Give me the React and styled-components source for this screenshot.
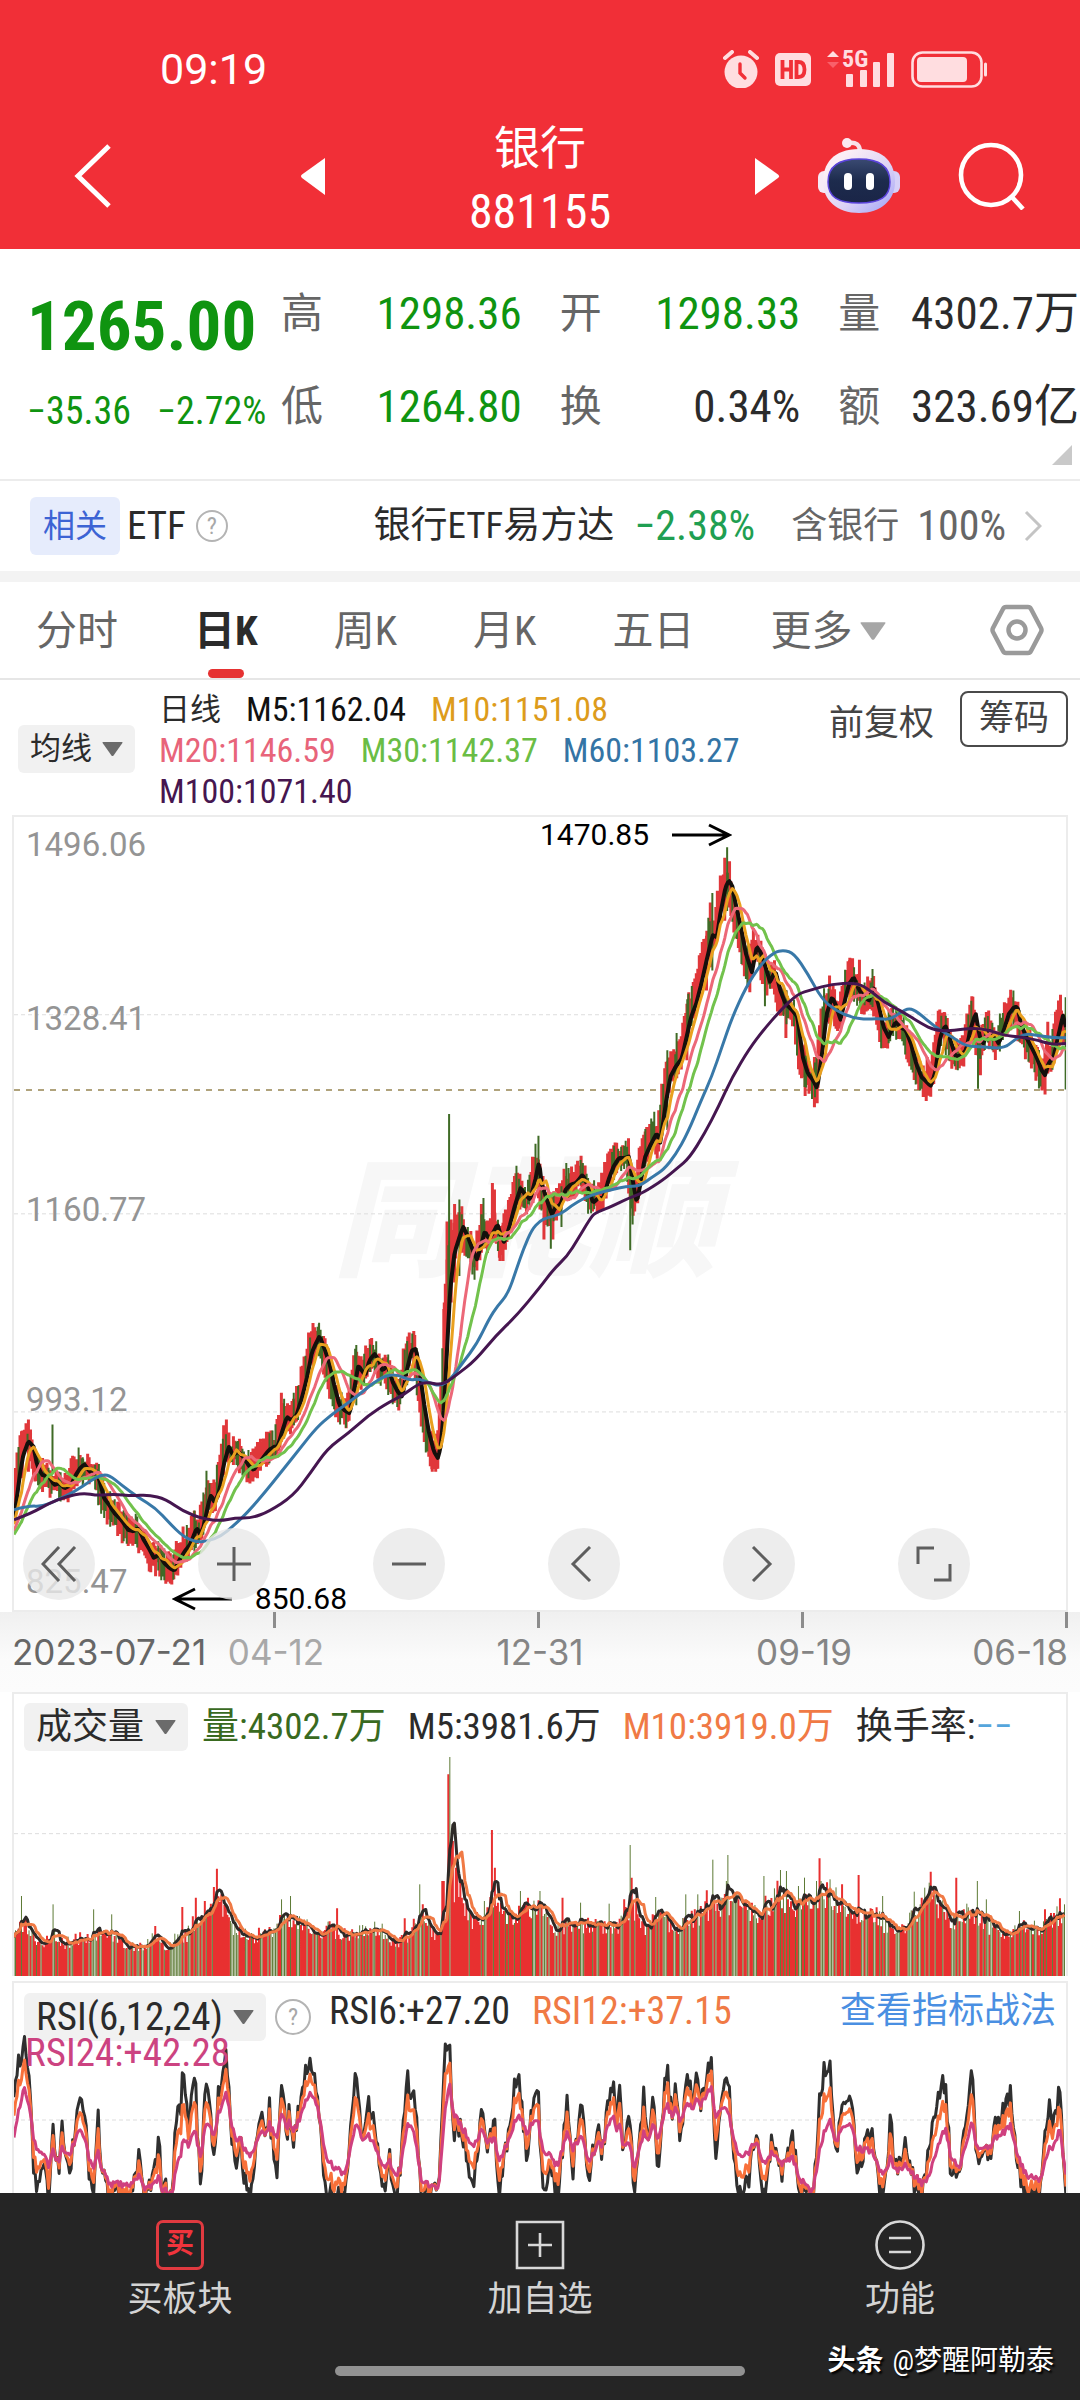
import React, { useState } from 'react';
import styled, { createGlobalStyle } from 'styled-components';

const GlobalStyle = createGlobalStyle`
    * {
        box-sizing: border-box;
    }
    body {
        margin: 0;
        background: #ffffff;
        color: #2b2b2b;
        font-family: 'Roboto Condensed', 'Noto Sans CJK SC', sans-serif;
    }
    button, select {
        font: inherit;
        color: inherit;
        background: none;
        border: 0;
        padding: 0;
        margin: 0;
        cursor: pointer;
    }
    svg {
        display: block;
        flex: none;
    }
    a {
        text-decoration: none;
    }
`;

/* ---------- series helpers ---------- */

const DAYS = 700;

// same noise on every render
const noise = (n) => {
    const s = Math.sin(n * 127.1 + 11.7) * 43758.5453;
    return s - Math.floor(s);
};

const toPairs = (text) => text.trim().split(/\s+/).map((p) => p.split(',').map(Number));

const valueAt = (pairs, x) => {
    if (x <= pairs[0][0]) return pairs[0][1];
    for (let i = 1; i < pairs.length; i++) {
        if (x <= pairs[i][0]) {
            const [x0, y0] = pairs[i - 1];
            const [x1, y1] = pairs[i];
            return y0 + ((y1 - y0) * (x - x0)) / (x1 - x0 || 1);
        }
    }
    return pairs[pairs.length - 1][1];
};

const linePath = (pts) => 'M' + pts.map(([x, y]) => `${x.toFixed(1)} ${y.toFixed(1)}`).join('L');

const smoothPath = (pts) => {
    let d = `M${pts[0][0]} ${pts[0][1]}`;
    for (let i = 1; i < pts.length - 1; i++) {
        const mx = (pts[i][0] + pts[i + 1][0]) / 2;
        const my = (pts[i][1] + pts[i + 1][1]) / 2;
        d += `Q${pts[i][0]} ${pts[i][1]} ${mx} ${my}`;
    }
    const last = pts[pts.length - 1];
    return `${d}L${last[0]} ${last[1]}`;
};

/* ---------- price series ---------- */

const MA5 = toPairs(`
-100,2190 -40,2205 10,2170 38,2135 45,2080 55,2000 65,1940 80,1898 95,1915 105,1970 120,2000 140,2005 155,2030 170,2025
185,2040 205,2030 215,2005 230,1980 243,1968 255,1985 265,1995 278,1995 288,2020 300,2070 315,2090 330,2115 350,2135
370,2165 385,2170 400,2160 415,2195 430,2220 445,2250 460,2240 475,2265 490,2280 505,2288 520,2255 535,2230 550,2210
570,2160 580,2180 590,2155 605,2080 612,2060 622,2085 635,2050 648,1970 663,1915 675,1940 690,1930 705,1945 720,1970
735,1985 750,1965 765,1945 780,1925 795,1915 805,1915 818,1870 832,1825 845,1835 860,1820 875,1770 890,1710 905,1630
918,1600 927,1582 940,1615 955,1660 970,1730 985,1790 1000,1805 1015,1815 1028,1740 1040,1670 1050,1685 1060,1700
1072,1655 1087,1635 1100,1655 1110,1685 1125,1670 1140,1720 1155,1750 1168,1765 1180,1690 1195,1625 1208,1620
1220,1700 1232,1790 1245,1870 1260,1930 1272,1950 1280,1910 1290,1790 1300,1580 1308,1430 1320,1330 1332,1290
1345,1252 1358,1280 1372,1320 1385,1350 1397,1310 1408,1265 1420,1290 1432,1270 1445,1245 1455,1280 1465,1300
1480,1250 1495,1190 1512,1135 1525,1155 1540,1170 1555,1110 1566,1055 1573,1120 1588,1170 1603,1215 1613,1195
1628,1185 1643,1140 1658,1125 1673,1120 1693,1095 1708,1130 1723,1180 1738,1165 1753,1165 1768,1110 1783,1070
1798,1045 1813,1045 1828,1040 1838,1110 1850,1180 1863,1110 1873,1045 1888,1010 1908,970 1918,1000 1928,930
1936,870 1948,800 1963,770 1981,745 1993,690 2008,620 2023,580 2038,520 2053,450 2071,373 2083,380 2093,310
2108,230 2118,208 2128,225 2138,280 2153,350 2168,430 2185,485 2200,405 2213,430 2228,480 2238,515 2253,480
2268,540 2283,580 2303,600 2318,620 2333,740 2348,790 2363,810 2375,835 2388,740 2403,610 2418,560 2428,580
2443,628 2458,560 2468,520 2481,500 2498,540 2513,560 2526,570 2538,530 2553,580 2568,650 2583,680 2603,635
2618,650 2633,660 2648,700 2663,760 2678,800 2693,815 2705,828 2718,790 2733,680 2748,645 2763,690 2778,740
2793,735 2808,720 2823,650 2836,608 2848,680 2858,700 2873,660 2888,670 2903,700 2918,660 2933,610 2948,590
2958,590 2968,640 2983,680 2998,710 3013,740 3028,780 3038,795 3048,760 3063,740 3076,680 3090,615 3099,650`);

const MA60 = toPairs(`
38,2105 80,2093 120,2095 160,2078 215,2050 260,2018 290,2000 315,2000 350,2030 400,2068 450,2100 490,2145 530,2185
565,2202 600,2200 640,2185 680,2150 720,2110 770,2050 820,1985 870,1920 920,1855 960,1820 1000,1790 1040,1760
1080,1725 1120,1700 1155,1698 1190,1715 1215,1710 1240,1720 1280,1733 1310,1710 1345,1660 1385,1605 1420,1530
1445,1490 1475,1455 1500,1380 1520,1320 1545,1260 1568,1235 1588,1225 1628,1215 1658,1190 1698,1165 1738,1150
1778,1140 1818,1130 1858,1130 1898,1100 1928,1080 1963,1035 1998,970 2038,870 2068,800 2098,710 2128,620 2168,530
2208,465 2248,425 2278,418 2308,428 2348,490 2388,565 2428,600 2478,622 2518,627 2548,624 2588,628 2618,605
2643,593 2668,605 2718,650 2768,680 2808,708 2858,710 2918,715 2948,690 2978,670 3018,675 3058,682 3099,682`);

const MA100 = toPairs(`
38,2135 90,2115 140,2085 190,2065 240,2054 280,2062 330,2058 380,2063 430,2060 480,2073 530,2110 590,2133 640,2138
680,2130 730,2130 780,2110 850,2063 900,1995 950,1920 1010,1875 1070,1820 1130,1780 1170,1760 1210,1728 1240,1720
1285,1730 1330,1695 1380,1655 1440,1580 1500,1520 1568,1435 1608,1380 1648,1340 1678,1290 1713,1230 1728,1210
1768,1195 1828,1165 1868,1150 1928,1110 1968,1075 2003,1045 2048,970 2088,890 2128,800 2178,715 2218,660 2268,600
2318,550 2358,538 2418,520 2483,517 2518,530 2568,575 2618,600 2678,640 2718,660 2768,662 2828,652 2878,660
2918,675 2968,680 3018,690 3058,703 3099,700`);

// x, top, bottom, falling day
const SPIKES = [
    [62, 1867, 2010, 0], [80, 1833, 1990, 0], [150, 1848, 1998, 1], [238, 1947, 2030, 1], [285, 1967, 2050, 1],
    [450, 2230, 2305, 0], [486, 2270, 2315, 0], [503, 2260, 2314, 0], [530, 2155, 2260, 0], [563, 2107, 2230, 1],
    [598, 1987, 2130, 1], [648, 1850, 2000, 0], [656, 1833, 1960, 0], [816, 1752, 1900, 0], [824, 1770, 1890, 1],
    [852, 1752, 1850, 1], [908, 1542, 1670, 0], [925, 1545, 1640, 1], [1004, 1790, 1858, 1], [1034, 1608, 1790, 1],
    [1074, 1607, 1690, 1], [1126, 1652, 1740, 1], [1182, 1596, 1730, 1], [1204, 1578, 1680, 0],
    [1255, 1900, 1990, 0], [1265, 1890, 1990, 0], [1290, 1480, 1800, 0], [1298, 1236, 1600, 0], [1304, 912, 1560, 1],
    [1310, 1230, 1480, 0], [1320, 1183, 1420, 0], [1334, 1170, 1400, 1], [1341, 1190, 1330, 0],
    [1378, 1320, 1412, 1], [1398, 1183, 1330, 0], [1404, 1165, 1300, 1], [1430, 1120, 1290, 0], [1436, 1140, 1290, 0],
    [1452, 1250, 1355, 0], [1461, 1240, 1355, 0], [1500, 1068, 1210, 1], [1510, 1092, 1200, 0], [1548, 1042, 1180, 0],
    [1564, 978, 1120, 1], [1580, 1130, 1290, 0], [1600, 1180, 1318, 1], [1606, 1170, 1290, 0], [1631, 1130, 1253, 1],
    [1645, 1060, 1170, 1], [1688, 1038, 1130, 0], [1693, 1060, 1120, 1], [1784, 1008, 1110, 1], [1826, 985, 1070, 0],
    [1831, 1060, 1323, 1], [1838, 1080, 1245, 1], [1875, 957, 1070, 1], [1901, 905, 1010, 1], [1939, 720, 960, 1],
    [1966, 668, 800, 1], [1996, 580, 750, 0], [2000, 550, 700, 1], [2053, 375, 540, 0], [2064, 275, 470, 0],
    [2070, 246, 480, 1], [2106, 140, 330, 0], [2113, 108, 300, 1], [2120, 150, 290, 0], [2179, 400, 545, 0],
    [2223, 430, 587, 1], [2284, 540, 683, 0], [2340, 700, 858, 0], [2367, 740, 892, 0], [2375, 760, 880, 0],
    [2411, 495, 640, 0], [2470, 441, 560, 0], [2478, 443, 560, 0], [2498, 447, 570, 0], [2536, 475, 590, 1],
    [2512, 540, 612, 0], [2580, 620, 715, 0], [2695, 740, 850, 0], [2703, 760, 857, 0], [2746, 607, 720, 0],
    [2825, 557, 700, 0], [2843, 690, 836, 1], [2850, 660, 795, 0], [2874, 600, 690, 0], [2938, 538, 660, 0],
    [2946, 540, 650, 1], [3038, 740, 853, 0], [3046, 634, 790, 0], [3083, 553, 650, 0], [3098, 560, 838, 1],
];

const P_LEFT = 38;
const P_STEP = 3061 / DAYS;
const dayX = (i) => P_LEFT + i * P_STEP;
const m5 = (i) => valueAt(MA5, dayX(i));
const m10 = (i) => (m5(i) + m5(i - 5)) / 2;
const m20 = (i) => (m10(i) + m10(i - 10)) / 2;
const m30 = (i) => (m10(i) + m10(i - 10) + m10(i - 20)) / 3;
const series = (fn) => linePath(Array.from({ length: DAYS + 1 }, (_, i) => [dayX(i), fn(i)]));

const candles = Array.from({ length: DAYS }, (_, i) => {
    const mid = m5(i + 2);
    const slope = m5(i + 3) - m5(i);
    const falling = noise(i) < (slope > 0 ? 0.42 : 0.18);
    const up = 14 + noise(i * 3) * 40 + Math.abs(slope) / 3;
    const down = 14 + noise(i * 5) * 34 + Math.abs(slope) / 3;
    return [dayX(i), mid - up, mid + down, falling ? 1 : 0];
}).concat(SPIKES);

const candlePath = (kind) =>
    candles.filter((c) => c[3] === kind).map(([x, t, b]) => `M${x.toFixed(1)} ${t.toFixed(0)}V${b.toFixed(0)}`).join('');

/* ---------- volume series ---------- */

const VOL_BASE = toPairs(`
18,805 30,760 42,720 55,760 68,780 85,752 100,790 115,765 130,770 150,755 165,748 185,780 205,800 230,768 250,795
265,765 280,755 290,715 303,690 318,658 328,660 340,720 355,745 375,768 390,740 402,745 415,710 430,705 445,725
465,745 490,740 505,755 530,745 560,740 580,780 598,770 612,720 625,715 640,765 680,640 692,710 705,715 715,700
722,670 735,690 750,705 765,680 790,675 805,720 820,735 850,725 875,735 905,740 918,700 932,675 945,735 965,705
985,738 1005,710 1025,700 1042,665 1060,670 1080,655 1100,690 1120,675 1140,625 1155,660 1170,670 1185,665
1205,625 1225,640 1240,680 1255,690 1270,670 1290,715 1310,750 1330,715 1345,680 1360,640 1375,670 1390,720
1410,690 1430,695 1450,735 1465,755 1490,725 1510,740 1530,720 1545,700 1550,700`);

const VOL_SPIKES = toPairs(`
30,645 75,670 134,685 160,700 223,735 264,678 283,650 297,660 309,618 314,563 321,640 408,655 421,645 488,682
588,712 608,610 614,670 642,600 645,600 650,280 652,228 655,480 658,480 661,560 664,540 667,600 671,650 702,660
715,447 718,560 756,630 785,630 817,650 843,665 884,668 907,655 916,492 918,590 952,648 997,640 1014,640 1028,628
1036,536 1056,600 1057,522 1071,632 1110,585 1134,567 1142,570 1160,615 1170,590 1187,600 1190,532 1194,600
1206,595 1223,610 1249,582 1284,645 1328,632 1345,620 1350,605 1354,572 1391,590 1421,600 1435,655 1482,690
1520,685 1541,652 1547,670`);

const V_STEP = 1532 / DAYS;
const volX = (i) => 18 + i * V_STEP;

const volumes = Array.from({ length: DAYS }, (_, i) => {
    const base = 885 - valueAt(VOL_BASE, volX(i + 4));
    return base * (0.78 + noise(i * 7 + 1) * 0.36);
});
VOL_SPIKES.forEach(([x, y]) => {
    const i = Math.round((x - 18) / V_STEP);
    if (i < DAYS) volumes[i] = Math.max(volumes[i], 885 - y);
});

const volAverage = (n) =>
    linePath(volumes.map((_, i) => {
        const part = volumes.slice(Math.max(0, i - n + 1), i + 1);
        return [volX(i), 885 - part.reduce((a, b) => a + b, 0) / part.length];
    }));

const volBars = (test) =>
    volumes.map((v, i) => (test(i) ? `M${volX(i).toFixed(1)} 885V${(885 - v).toFixed(0)}` : '')).join('');

const VOL_GREEN_DAYS = [75, 134, 160, 380, 421, 608, 652, 756, 785, 843, 916, 952, 1014, 1036, 1057, 1071, 1110, 1134, 1160, 1284, 1328, 1421, 1482]
    .map((x) => Math.round((x - 18) / V_STEP));
const VOL_RED_DAYS = [314, 715, 718, 1190, 1249, 1354, 1391].map((x) => Math.round((x - 18) / V_STEP));
const isGreenVolume = (i) =>
    VOL_GREEN_DAYS.includes(i) || (noise(i + 400) > 0.66 && !(i > 284 && i < 300) && !VOL_RED_DAYS.includes(i));

/* ---------- RSI series ---------- */

const RSI6 = toPairs(`
18,385 23,240 28,240 32,165 40,310 47,560 52,640 60,560 68,650 75,425 83,600 88,460 96,575 103,520 113,330 119,355
127,560 133,640 141,415 147,600 160,650 190,650 196,550 202,515 208,640 222,600 228,472 234,620 248,650 255,380
260,400 265,250 272,470 281,268 289,625 299,270 308,535 316,350 327,232 335,480 342,570 347,490 358,650 366,600
377,380 384,500 390,390 400,610 409,296 415,470 419,390 424,500 432,410 440,285 448,225 457,285 465,480 473,640
485,650 500,640 508,480 515,260 525,510 535,375 543,420 555,625 565,540 575,640 583,520 590,268 596,390 601,340
610,620 625,650 636,620 645,210 652,172 656,460 670,440 688,630 700,345 707,540 717,405 725,640 738,470 751,272
760,450 765,550 774,350 781,330 788,640 800,560 810,640 823,372 832,560 844,375 855,620 868,415 875,540 883,370
890,300 895,430 900,355 907,540 914,345 920,640 935,355 943,460 949,335 956,580 968,258 976,400 982,300 988,470
999,265 1006,380 1012,295 1018,390 1034,218 1039,540 1050,300 1058,290 1066,560 1076,640 1088,600 1098,445
1110,640 1123,480 1133,600 1143,520 1153,480 1163,640 1183,650 1190,380 1197,275 1206,225 1214,560 1224,345
1236,325 1245,560 1256,520 1266,445 1276,600 1285,640 1294,440 1304,560 1317,490 1328,600 1340,640 1355,430
1365,330 1374,305 1383,600 1395,560 1413,268 1420,540 1430,480 1440,545 1448,430 1460,400 1469,322 1480,560
1495,640 1512,630 1524,378 1531,440 1541,325 1549,640`);

const RSI_SLOW = toPairs(`
18,515 32,370 60,510 80,540 113,480 135,540 160,600 190,600 215,620 250,640 270,520 290,500 310,440 327,380 345,470
370,490 400,430 430,440 450,370 460,390 475,510 500,560 520,470 545,520 580,570 595,460 612,590 636,630 652,350
670,440 700,470 730,510 760,430 785,460 805,530 830,480 860,530 890,440 920,540 945,470 970,410 1000,400 1034,350
1050,400 1075,490 1095,490 1120,530 1150,550 1180,630 1205,480 1235,460 1260,520 1290,570 1330,580 1350,620
1375,490 1395,560 1413,480 1430,500 1469,470 1490,560 1515,590 1541,490 1550,560`);

const rsiLine = (share) =>
    linePath(Array.from({ length: DAYS + 1 }, (_, i) => {
        const x = volX(i);
        const slow = valueAt(RSI_SLOW, x);
        const fast = valueAt(RSI6, x) + (noise(i * 2 + 3) - 0.5) * 80;
        return [x, slow + (fast - slow) * share];
    }));

/* ---------- header ---------- */

const Page = styled.main`
    display: flex;
    flex-direction: column;
    overflow: hidden;
`;

const Header = styled.header`
    background: #f12f37;
    color: #ffffff;
    padding-bottom: 5px;
`;

const StatusBar = styled.div`
    display: flex;
    align-items: center;
    justify-content: space-between;
    padding: 47px 92px 0 160px;
    color: #ffdde0;
`;

const Clock = styled.time`
    font-family: Roboto, sans-serif;
    font-size: 43px;
    line-height: 44px;
    color: #ffffff;
`;

const StatusIcons = styled.div`
    display: flex;
    align-items: center;
    gap: 16px;
`;

const NavBar = styled.nav`
    display: grid;
    grid-template-columns: 1fr 480px 1fr;
    align-items: center;
    padding-top: 17px;
`;

const NavSide = styled.div`
    display: flex;
    align-items: center;
    justify-content: ${({ $end }) => ($end ? 'space-between' : 'flex-start')};
    padding: ${({ $end }) => ($end ? '0 54px 0 38px' : '0 0 0 74px')};
`;

const Switcher = styled.div`
    display: flex;
    align-items: center;
    justify-content: space-between;
`;

const Title = styled.h1`
    display: flex;
    flex-direction: column;
    align-items: center;
    margin: 0;
    padding-top: 8px;
    font-size: 48px;
    line-height: 64px;
    font-weight: 400;
`;

const TitleName = styled.span`
    font-size: 46px;
`;

const IconButton = styled.button`
    display: flex;
`;

/* ---------- quote ---------- */

const Quote = styled.section`
    position: relative;
    display: grid;
    grid-template-columns: 281px 1fr;
    padding: 18px 1px 26px 0;
    border-bottom: 2px solid #ececec;
`;

const Last = styled.div`
    padding: 10px 0 0 27px;
    color: #0f9410;
`;

const LastPrice = styled.div`
    font-size: 69px;
    font-weight: 700;
    line-height: 100px;
`;

const LastChange = styled.div`
    display: flex;
    gap: 26px;
    font-size: 38px;
    line-height: 68px;
    white-space: nowrap;
`;

const Stats = styled.dl`
    display: grid;
    grid-template-columns: repeat(3, 1fr);
    column-gap: 38px;
    margin: 0;
`;

const Stat = styled.div`
    display: flex;
    align-items: center;
    justify-content: space-between;
    font-size: 45px;
    line-height: 93px;
    white-space: nowrap;
`;

const StatLabel = styled.dt`
    font-size: 42px;
    color: #666666;
`;

const StatValue = styled.dd`
    margin: 0;
    color: ${({ $down }) => ($down ? '#0f9410' : '#2b2b2b')};
`;

const Corner = styled.button`
    position: absolute;
    right: 8px;
    bottom: 14px;
`;

const EtfRow = styled.a`
    display: flex;
    align-items: center;
    padding: 16px 38px 16px 30px;
    font-size: 36px;
    line-height: 58px;
    color: #2b2b2b;
    border-bottom: 11px solid #f3f3f3;
`;

const Badge = styled.span`
    padding: 0 13px;
    margin-right: 7px;
    border-radius: 6px;
    background: #e6ecfc;
    color: #3c63d4;
    font-size: 32px;
`;

const EtfTag = styled.span`
    font-size: 39px;
`;

const EtfName = styled.span`
    margin-left: auto;
    font-size: 37px;
`;

const EtfChange = styled.span`
    margin: 0 36px 0 20px;
    color: #1f9f52;
    font-size: 42px;
`;

const EtfShare = styled.span`
    display: flex;
    align-items: center;
    gap: 18px;
    color: #666666;
`;

const EtfWeight = styled.span`
    font-size: 42px;
`;

/* ---------- tabs ---------- */

const Tabs = styled.nav`
    display: flex;
    align-items: flex-start;
    gap: 76px;
    padding: 17px 36px 0 36px;
    border-bottom: 2px solid #e6e6e6;
`;

const Tab = styled.button`
    display: flex;
    flex-direction: column;
    align-items: center;
    font-size: 41px;
    line-height: 64px;
    font-weight: ${({ $active }) => ($active ? 700 : 400)};
    color: ${({ $active }) => ($active ? '#2b2b2b' : '#666666')};

    &::after {
        content: '';
        width: 36px;
        height: 9px;
        margin-top: 6px;
        border-radius: 5px;
        background: ${({ $active }) => ($active ? '#e63232' : 'transparent')};
    }
`;

const SettingButton = styled(IconButton)`
    margin-left: auto;
    padding-top: 5px;
`;

const Picker = styled.label`
    display: flex;
    align-items: center;
    gap: ${({ $plain }) => ($plain ? '8px' : '10px')};
    padding: ${({ $plain }) => ($plain ? '0' : '0 12px')};
    border-radius: 6px;
    background: ${({ $plain }) => ($plain ? 'none' : '#f1f1f1')};
    color: ${({ $plain }) => ($plain ? '#666666' : '#2b2b2b')};
    font-size: ${({ $size }) => $size}px;
    line-height: ${({ $plain }) => ($plain ? '64px' : '48px')};
`;

const PickerSelect = styled.select`
    appearance: none;
    outline: none;
`;

/* ---------- legends ---------- */

const AverageBar = styled.section`
    display: flex;
    align-items: flex-start;
    padding: 9px 12px 3px 18px;
`;

const AveragePicker = styled.div`
    padding-top: 36px;
    margin-right: 24px;
`;

const AverageList = styled.div`
    flex: 1;
    display: flex;
    flex-wrap: wrap;
    column-gap: 25px;
    font-size: 34px;
    line-height: 41px;
    max-width: 600px;
`;

const Tone = styled.span`
    color: ${({ $color }) => $color};
    white-space: nowrap;
`;

const PeriodName = styled.span`
    font-size: 31px;
`;

const Adjust = styled.div`
    display: flex;
    align-items: center;
    gap: 26px;
    margin-left: auto;
    padding-top: 2px;
    font-size: 35px;
    color: #444444;
`;

const ChipButton = styled.button`
    padding: 0 17px;
    border: 2px solid #4a4a4a;
    border-radius: 8px;
    line-height: 52px;
`;

/* ---------- charts ---------- */

const PriceChart = styled.section`
    position: relative;
    height: 797px;
    margin: 0 12px;
    border: 2px solid #ececec;
`;

const Plot = styled.svg`
    position: relative;
    width: 100%;
    height: ${({ $height }) => $height};
`;

const Watermark = styled.div`
    position: absolute;
    top: 43%;
    left: 0;
    right: 30px;
    text-align: center;
    font-size: 128px;
    line-height: 128px;
    font-style: italic;
    font-weight: 900;
    color: #f7f7f7;
`;

const PriceLabel = styled.span`
    position: absolute;
    left: 12px;
    top: ${({ $top }) => $top}%;
    font-family: Roboto, sans-serif;
    font-size: 33px;
    line-height: 40px;
    color: #949494;
`;

const Extreme = styled.span`
    position: absolute;
    display: flex;
    align-items: center;
    gap: 23px;
    font-family: Roboto, sans-serif;
    font-size: 30px;
    line-height: 36px;
    color: #000000;
`;

const Peak = styled(Extreme)`
    left: 50%;
    top: 0;
`;

const Trough = styled(Extreme)`
    left: 15%;
    bottom: -7px;
`;

const Controls = styled.div`
    position: absolute;
    left: 9px;
    right: 96px;
    bottom: 10px;
    display: flex;
    justify-content: space-between;
`;

const RoundButton = styled.button`
    display: flex;
    align-items: center;
    justify-content: center;
    width: 72px;
    height: 72px;
    border-radius: 50%;
    background: rgba(232, 232, 232, 0.8);
`;

const Axis = styled.div`
    padding: 0 12px 15px;
    background: linear-gradient(#f0f0f0, #fbfbfb 60%, #fcfcfc);
    font-family: Inter, sans-serif;
    font-size: 35px;
    line-height: 49px;
    color: #858585;
`;

const Ticks = styled.div`
    display: grid;
    grid-template-columns: repeat(4, 1fr);
`;

const Tick = styled.span`
    height: 16px;
    border-right: 3px solid #8c8c8c;
`;

const Dates = styled.div`
    display: grid;
    grid-template-columns: 1fr 2fr 2fr 2fr 1fr;
`;

const DateLabel = styled.span`
    display: flex;
    min-width: 0;
    white-space: nowrap;
    justify-content: ${({ $align }) => $align || 'center'};
    color: ${({ $color }) => $color || 'inherit'};
`;

const Panel = styled.section`
    position: relative;
    margin: 0 12px;
    border: 2px solid #ececec;
    border-bottom: 0;
`;

const VolumePanel = styled(Panel)`
    margin-bottom: 5px;
`;

const PanelLegend = styled.div`
    display: flex;
    align-items: flex-start;
    height: ${({ $height }) => $height}px;
    padding: ${({ $top }) => `${$top}px 10px 0`};
    font-size: 37px;
    line-height: 48px;
    white-space: nowrap;
`;

const LegendItems = styled.div`
    display: flex;
    gap: 22px;
    margin-left: ${({ $before }) => $before}px;
    font-size: ${({ $size }) => $size}px;
`;

// the RSI drop-down sits a little lower than the values beside it
const LoweredTools = styled.div`
    display: flex;
    align-items: center;
    gap: 9px;
    padding-top: 6px;
`;

const GuideLink = styled.a`
    margin-left: auto;
    font-size: 36px;
    color: #4a8fe2;
`;

const OverlayTone = styled(Tone)`
    position: absolute;
    z-index: 1;
    left: 11px;
    top: 48px;
    font-size: 39px;
    line-height: 44px;
`;

/* ---------- bottom bar ---------- */

const BottomBar = styled.footer`
    position: relative;
    padding: 27px 0 24px;
    background: #252525;
    color: #d4d4d4;
`;

const Actions = styled.div`
    display: grid;
    grid-template-columns: repeat(3, 1fr);
`;

const Action = styled.button`
    display: flex;
    flex-direction: column;
    align-items: center;
    gap: 6px;
    font-size: 35px;
    line-height: 48px;
`;

const BuyMark = styled.span`
    width: 48px;
    height: 50px;
    border: 3px solid #e03a40;
    border-radius: 7px;
    color: #f0343c;
    font-size: 28px;
    font-weight: 700;
    line-height: 42px;
`;

const HomeIndicator = styled.div`
    width: 38%;
    height: 10px;
    margin: 42px auto 0;
    border-radius: 5px;
    background: #929292;
`;

const Credit = styled.div`
    position: absolute;
    right: 26px;
    bottom: 20px;
    display: flex;
    gap: 9px;
    font-size: 28px;
    line-height: 38px;
    color: #ffffff;
    text-shadow: 2px 2px 2px #000000;
`;

/* ---------- icons ---------- */

const AlarmIcon = () => (
    <svg width="36" height="38" viewBox="0 0 36 38" fill="currentColor">
        <circle cx="18" cy="22" r="16.5" />
        <path d="M2 8 9 2M27 2l7 6" stroke="currentColor" strokeWidth="4" strokeLinecap="round" />
        <path d="M17 14v9l5 5" fill="none" stroke="#f12f37" strokeWidth="3.4" strokeLinecap="round" />
    </svg>
);

const HdIcon = () => (
    <svg width="36" height="33" viewBox="0 0 36 33">
        <rect width="36" height="33" rx="5" fill="currentColor" />
        <path d="M7.500 7v19M16 7v19M8 16.500h8M21.500 9v15h2q6 0 6-7.500t-6-7.500z" fill="none" stroke="#f12f37" strokeWidth="3.800" />
    </svg>
);

const NetworkMark = styled.span`
    position: relative;
    display: flex;
`;

const NetworkName = styled.span`
    position: absolute;
    left: 15px;
    top: -3px;
    font-size: 24px;
    line-height: 24px;
    font-weight: 700;
`;

const SignalIcon = () => (
    <NetworkMark>
        <svg width="68" height="38" viewBox="0 0 68 38" fill="currentColor">
            <path d="M0 7 6 1l6 6z" />
            <path d="M0 12h12l-6 6z" fill="#f9606a" />
            <rect x="19" y="24" width="7" height="13" rx="1" />
            <rect x="33" y="20" width="7" height="17" rx="1" />
            <rect x="46" y="12" width="7" height="25" rx="1" />
            <rect x="60" y="3" width="7" height="34" rx="1" />
        </svg>
        <NetworkName>5G</NetworkName>
    </NetworkMark>
);

const BatteryIcon = () => (
    <svg width="77" height="37" viewBox="0 0 77 37">
        <rect x="1.500" y="1.500" width="69" height="34" rx="10" fill="none" stroke="currentColor" strokeWidth="2.600" />
        <rect x="6" y="6" width="50" height="25" rx="4" fill="currentColor" />
        <path d="M74.500 13v11" stroke="currentColor" strokeWidth="3" strokeLinecap="round" />
    </svg>
);

const BackIcon = () => (
    <svg width="38" height="64" viewBox="0 0 38 64" fill="none" stroke="#ffffff" strokeWidth="5">
        <path d="M35 2 4 32l31 30" />
    </svg>
);

const TriangleIcon = ({ right }) => (
    <svg width="25" height="37" viewBox="0 0 25 37" fill="#ffffff">
        <path d={right ? 'M0 0v37L23 20q2-2 0-3.500z' : 'M25 0v37L2 20q-2-2 0-3.500z'} />
    </svg>
);

const RobotIcon = () => (
    <svg width="82" height="76" viewBox="0 0 82 76">
        <defs>
            <linearGradient id="shell" x1="0" y1="0" x2="1" y2="1">
                <stop offset="0.2" stopColor="#fbeef6" />
                <stop offset="0.6" stopColor="#dcd2f5" />
                <stop offset="0.85" stopColor="#b3b2f7" />
            </linearGradient>
            <linearGradient id="visor" x1="0" y1="0" x2="0" y2="1">
                <stop offset="0" stopColor="#3a4a72" />
                <stop offset="0.5" stopColor="#1d2b4d" />
                <stop offset="1" stopColor="#1a2547" />
            </linearGradient>
        </defs>
        <path d="M30 5q12-2 12 9" fill="none" stroke="#f8dfe9" strokeWidth="4.500" />
        <circle cx="29" cy="5" r="5" fill="#fbe9f0" />
        <rect x="0" y="33" width="13" height="22" rx="6" fill="#f6e9f6" />
        <rect x="69" y="33" width="13" height="22" rx="6" fill="#d6d0f8" />
        <path d="M41 11c26 0 36 15 36 33S63 75 41 75 5 62 5 44s10-33 36-33z" fill="url(#shell)" />
        <path d="M41 21c22 0 31 8 31 23S62 65 41 65 10 59 10 44s9-23 31-23z" fill="url(#visor)" stroke="#5b44dc" strokeWidth="1.500" />
        <rect x="26" y="35" width="8" height="17" rx="4" fill="#ffffff" />
        <rect x="48" y="35" width="8" height="17" rx="4" fill="#ffffff" />
    </svg>
);

const SearchIcon = () => (
    <svg width="68" height="68" viewBox="0 0 68 68" fill="none" stroke="#ffffff" strokeWidth="4.600">
        <circle cx="33" cy="33" r="30" />
        <path d="m53 54 12 13" />
    </svg>
);

const CaretIcon = ({ color = '#6b6b6b', width = 20 }) => (
    <svg width={width} height={width > 22 ? 20 : 16} viewBox="0 0 20 16" preserveAspectRatio="none" fill={color}>
        <path d="M1 1h18q1 0 .4 1L11 14.500q-1 1-2 0L.6 2Q0 1 1 1z" />
    </svg>
);

const HelpMark = styled.span`
    display: flex;
    align-items: center;
    justify-content: center;
    flex: none;
    width: ${({ $size }) => $size}px;
    height: ${({ $size }) => $size}px;
    margin-left: ${({ $before }) => $before || 0}px;
    border: 2px solid #b4b4b4;
    border-radius: 50%;
    color: #a8a8a8;
    font-size: 24px;
    line-height: 28px;
`;

const SettingIcon = () => (
    <svg width="54" height="52" viewBox="0 0 54 52" fill="none" stroke="#9a9a9a" strokeWidth="4.500" strokeLinejoin="round">
        <path d="M16 3h22q2 0 3 2l10 19q1 2 0 4L41 47q-1 2-3 2H16q-2 0-3-2L3 28q-1-2 0-4L13 5q1-2 3-2z" />
        <circle cx="27" cy="26" r="8.500" />
    </svg>
);

const ArrowIcon = ({ left }) => (
    <svg width="60" height="24" viewBox="0 0 60 24" fill="none" stroke="#000000" strokeWidth="3">
        <path d={left ? 'M60 12H3M23 2 3 12l20 10' : 'M0 12h57M37 2l20 10-20 10'} />
    </svg>
);

const CONTROL_PATHS = {
    first: 'M18 1 2 18l16 17M34 1 18 18l16 17',
    zoomIn: 'M18 1v34M1 18h34',
    zoomOut: 'M1 18h34',
    previous: 'M24 1 7 18l17 17',
    next: 'M12 1l17 17-17 17',
    full: 'M2 18V2h16M34 18v16H18',
};

const CONTROL_NAMES = {
    first: '最早',
    zoomIn: '放大',
    zoomOut: '缩小',
    previous: '前移',
    next: '后移',
    full: '全屏',
};

/* ---------- page ---------- */

const TABS = ['分时', '日K', '周K', '月K', '五日'];

const STATS = [
    ['高', '1298.36', true], ['开', '1298.33', true], ['量', '4302.7万'],
    ['低', '1264.80', true], ['换', '0.34%'], ['额', '323.69亿'],
];

const PRICE_LABELS = [
    ['1496.06', 1], ['1328.41', 23], ['1160.77', 47], ['993.12', 71], ['825.47', 94],
];

const Select = ({ name, value, size, plain }) => (
    <Picker $size={size} $plain={plain}>
        <PickerSelect aria-label={name} defaultValue={value}>
            <option>{value}</option>
        </PickerSelect>
        <CaretIcon color={plain ? '#a6a6a6' : '#6b6b6b'} width={plain ? 26 : 21} />
    </Picker>
);

const Line = ({ d, color, width = 3 }) => (
    <path d={d} fill="none" stroke={color} strokeWidth={width} strokeLinejoin="round" vectorEffect="non-scaling-stroke" />
);

const Grid = ({ x, width, y, color = '#dddddd', dash = '4 3', thick = 1 }) => (
    <path d={`M${x} ${y}h${width}`} stroke={color} strokeWidth={thick} strokeDasharray={dash} vectorEffect="non-scaling-stroke" />
);

const App = () => {
    const [tab, setTab] = useState('日K');

    return (
        <Page>
            <GlobalStyle />
            <Header>
                <StatusBar>
                    <Clock>09:19</Clock>
                    <StatusIcons>
                        <AlarmIcon />
                        <HdIcon />
                        <SignalIcon />
                        <BatteryIcon />
                    </StatusIcons>
                </StatusBar>
                <NavBar>
                    <NavSide>
                        <IconButton aria-label="返回"><BackIcon /></IconButton>
                    </NavSide>
                    <Switcher>
                        <IconButton aria-label="上一个"><TriangleIcon /></IconButton>
                        <Title>
                            <TitleName>银行</TitleName>
                            <span>881155</span>
                        </Title>
                        <IconButton aria-label="下一个"><TriangleIcon right /></IconButton>
                    </Switcher>
                    <NavSide $end>
                        <IconButton aria-label="助手"><RobotIcon /></IconButton>
                        <IconButton aria-label="搜索"><SearchIcon /></IconButton>
                    </NavSide>
                </NavBar>
            </Header>

            <Quote>
                <Last>
                    <LastPrice>1265.00</LastPrice>
                    <LastChange>
                        <span>−35.36</span>
                        <span>−2.72%</span>
                    </LastChange>
                </Last>
                <Stats>
                    {STATS.map(([label, value, down]) => (
                        <Stat key={label}>
                            <StatLabel>{label}</StatLabel>
                            <StatValue $down={down}>{value}</StatValue>
                        </Stat>
                    ))}
                </Stats>
                <Corner aria-label="展开">
                    <svg width="20" height="20" viewBox="0 0 20 20" fill="#c9c9c9"><path d="M20 0v20H0z" /></svg>
                </Corner>
            </Quote>

            <EtfRow href="#etf">
                <Badge>相关</Badge>
                <EtfTag>ETF</EtfTag>
                <HelpMark $size={32} $before={10}>?</HelpMark>
                <EtfName>银行ETF易方达</EtfName>
                <EtfChange>−2.38%</EtfChange>
                <EtfShare>
                    <span>含银行</span>
                    <EtfWeight>100%</EtfWeight>
                    <svg width="18" height="32" viewBox="0 0 18 32" fill="none" stroke="#c4c4c4" strokeWidth="3">
                        <path d="M2 2l14 14L2 30" />
                    </svg>
                </EtfShare>
            </EtfRow>

            <Tabs>
                {TABS.map((name) => (
                    <Tab key={name} $active={tab === name} onClick={() => setTab(name)}>{name}</Tab>
                ))}
                <Select plain name="更多周期" value="更多" size={41} />
                <SettingButton aria-label="设置"><SettingIcon /></SettingButton>
            </Tabs>

            <AverageBar>
                <AveragePicker>
                    <Select name="主图指标" value="均线" size={31} />
                </AveragePicker>
                <AverageList>
                    <PeriodName>日线</PeriodName>
                    <Tone $color="#111111">M5:1162.04</Tone>
                    <Tone $color="#dd9c1c">M10:1151.08</Tone>
                    <Tone $color="#e8647a">M20:1146.59</Tone>
                    <Tone $color="#6abd45">M30:1142.37</Tone>
                    <Tone $color="#3474a5">M60:1103.27</Tone>
                    <Tone $color="#46164f">M100:1071.40</Tone>
                </AverageList>
                <Adjust>
                    <button>前复权</button>
                    <ChipButton>筹码</ChipButton>
                </Adjust>
            </AverageBar>

            <PriceChart>
                <Watermark>同花顺</Watermark>
                <Plot $height="100%" viewBox="38 17 3061 2390" preserveAspectRatio="none">
                    <Grid x={38} width={3061} y={613} />
                    <Grid x={38} width={3061} y={1213} />
                    <Grid x={38} width={3061} y={1810} />
                    <Grid x={38} width={3061} y={840} color="#b0a37c" dash="6 6" thick={2} />
                    <Line d={candlePath(0)} color="#e0373a" width={3} />
                    <Line d={candlePath(1)} color="#3f6b26" width={2} />
                    <Line d={series(m5)} color="#14100c" width={4} />
                    <Line d={series(m10)} color="#e9a01f" />
                    <Line d={series(m20)} color="#ec6878" />
                    <Line d={series(m30)} color="#72c24c" />
                    <Line d={smoothPath(MA60)} color="#3878a8" />
                    <Line d={smoothPath(MA100)} color="#451650" />
                </Plot>
                {PRICE_LABELS.map(([text, top]) => (
                    <PriceLabel key={text} $top={top}>{text}</PriceLabel>
                ))}
                <Peak>1470.85 <ArrowIcon /></Peak>
                <Trough><ArrowIcon left /> 850.68</Trough>
                <Controls>
                    {Object.keys(CONTROL_PATHS).map((key) => (
                        <RoundButton key={key} aria-label={CONTROL_NAMES[key]}>
                            <svg width="36" height="36" viewBox="0 0 36 36" fill="none" stroke="#5e5e5e" strokeWidth="3">
                                <path d={CONTROL_PATHS[key]} />
                            </svg>
                        </RoundButton>
                    ))}
                </Controls>
            </PriceChart>

            <Axis>
                <Ticks>
                    <Tick /><Tick /><Tick /><Tick />
                </Ticks>
                <Dates>
                    <DateLabel $align="flex-start" $color="#666666">2023-07-21</DateLabel>
                    <DateLabel $color="#a8a8a8">04-12</DateLabel>
                    <DateLabel>12-31</DateLabel>
                    <DateLabel>09-19</DateLabel>
                    <DateLabel $align="flex-end">06-18</DateLabel>
                </Dates>
            </Axis>

            <VolumePanel>
                <PanelLegend $height={62} $top={9}>
                    <Select name="副图指标一" value="成交量" size={36} />
                    <LegendItems $before={14} $size={37}>
                        <Tone $color="#396a1f">量:4302.7万</Tone>
                        <Tone $color="#2b2b2b">M5:3981.6万</Tone>
                        <Tone $color="#f07a45">M10:3919.0万</Tone>
                        <span>换手率:<Tone $color="#55a5dc">−−</Tone></span>
                    </LegendItems>
                </PanelLegend>
                <Plot $height="220px" viewBox="18 225 1532 660" preserveAspectRatio="none">
                    <Grid x={18} width={1532} y={458} />
                    <Line d={volBars((i) => !isGreenVolume(i))} color="#e83030" width={2} />
                    <Line d={volBars(isGreenVolume)} color="#5d7a35" width={1} />
                    <Line d={volAverage(5)} color="#2e2a28" />
                    <Line d={volAverage(10)} color="#f07a45" />
                </Plot>
            </VolumePanel>

            <Panel>
                <PanelLegend $height={50} $top={4}>
                    <LoweredTools>
                        <Select name="副图指标二" value="RSI(6,12,24)" size={39} />
                        <HelpMark $size={36}>?</HelpMark>
                    </LoweredTools>
                    <LegendItems $before={18} $size={38}>
                        <Tone $color="#2b2b2b">RSI6:+27.20</Tone>
                        <Tone $color="#f07a45">RSI12:+37.15</Tone>
                    </LegendItems>
                    <GuideLink href="#guide">查看指标战法</GuideLink>
                </PanelLegend>
                <OverlayTone $color="#cc4381">RSI24:+42.28</OverlayTone>
                <Plot $height="160px" viewBox="18 159 1532 480" preserveAspectRatio="none">
                    <Grid x={18} width={1532} y={420} />
                    <Line d={rsiLine(1)} color="#2f2f2f" />
                    <Line d={rsiLine(0.66)} color="#f8703a" />
                    <Line d={rsiLine(0.26)} color="#cf407f" />
                </Plot>
            </Panel>

            <BottomBar>
                <Actions>
                    <Action>
                        <BuyMark aria-hidden="true">买</BuyMark>
                        买板块
                    </Action>
                    <Action>
                        <svg width="50" height="50" viewBox="0 0 50 50" fill="none" stroke="#d8d8d8" strokeWidth="2.600">
                            <path d="M2 2h46v46H2zM25 13v24M13 25h24" />
                        </svg>
                        加自选
                    </Action>
                    <Action>
                        <svg width="50" height="50" viewBox="0 0 50 50" fill="none" stroke="#d8d8d8" strokeWidth="2.600">
                            <circle cx="25" cy="25" r="23.500" />
                            <path d="M14 18h22M14 32h22" />
                        </svg>
                        功能
                    </Action>
                </Actions>
                <HomeIndicator />
                <Credit><b>头条</b><span>@梦醒阿勒泰</span></Credit>
            </BottomBar>
        </Page>
    );
};

export default App;
